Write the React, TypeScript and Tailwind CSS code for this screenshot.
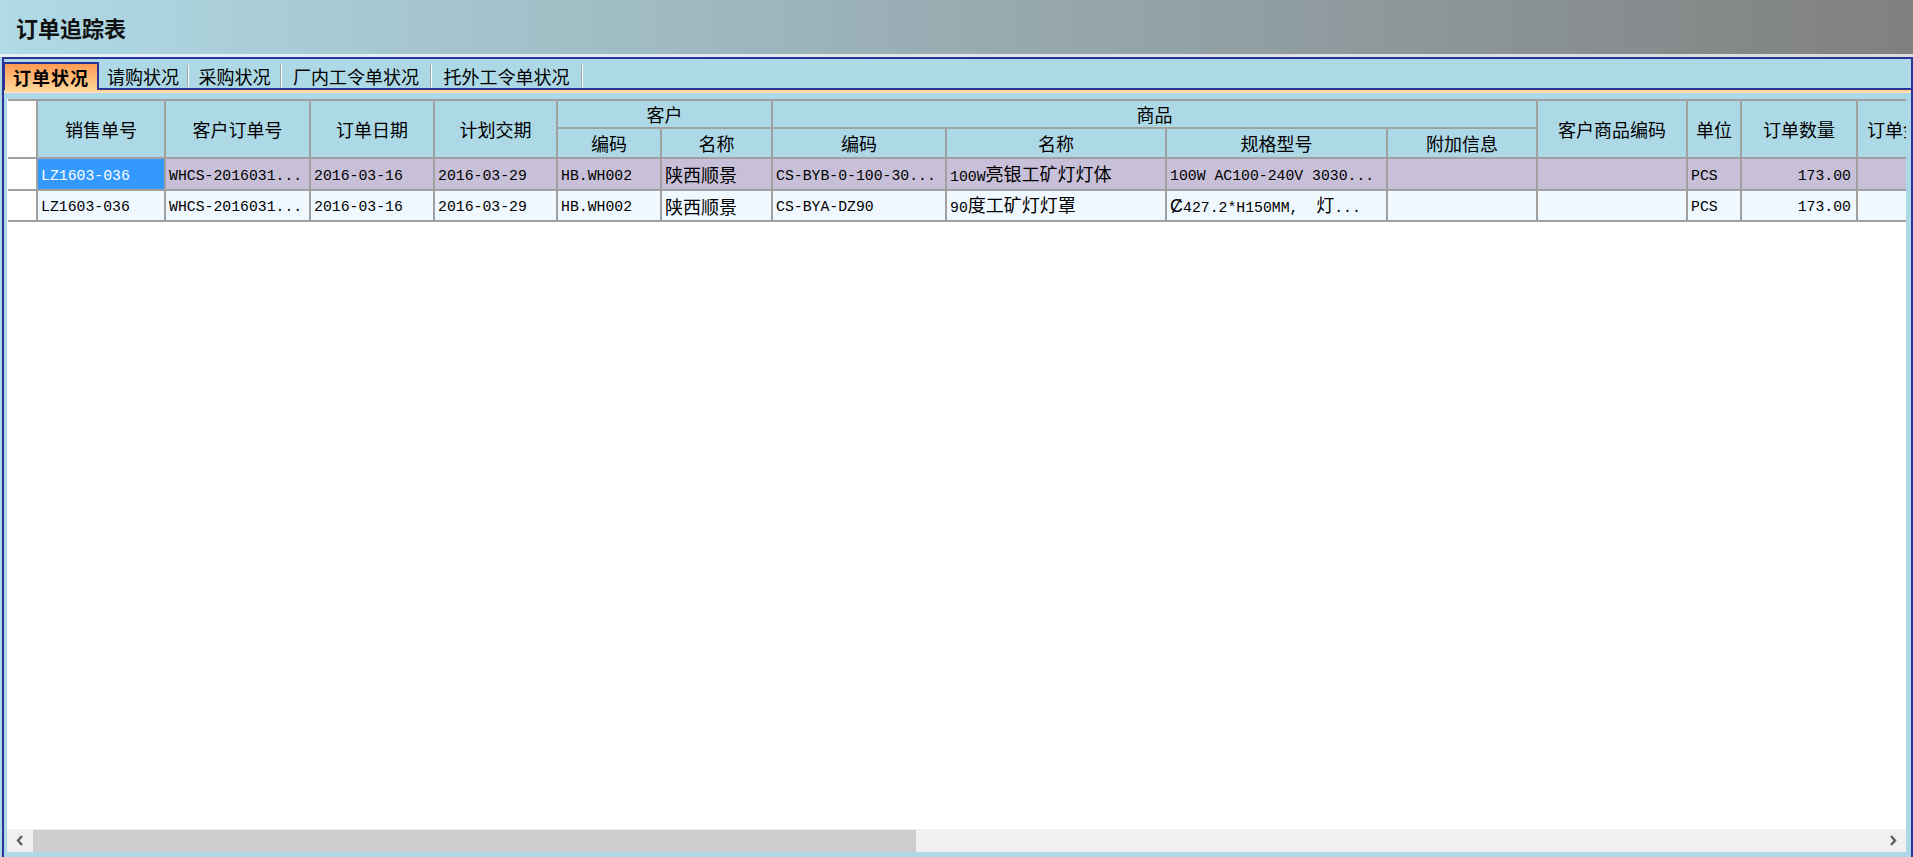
import React from "react";

const WIDE = /([\u0200-\u02ff\u2000-\uffff]+)/;

function Txt({ s }: { s: string }) {
  const parts = s.split(WIDE);
  return (
    <span className="whitespace-pre">
      {parts.map((p, i) =>
        p === "" ? null : WIDE.test(p) ? (
          <span key={i} className="font-['Noto_Sans_CJK_SC',sans-serif] text-[18px]">
            {p}
          </span>
        ) : (
          <span key={i} className="font-['Liberation_Mono',monospace] text-[14.8px]">
            {p}
          </span>
        )
      )}
    </span>
  );
}

const rows = [
  ["LZ1603-036", "WHCS-2016031...", "2016-03-16", "2016-03-29", "HB.WH002", "陕西顺景", "CS-BYB-0-100-30...", "100W亮银工矿灯灯体", "100W AC100-240V 3030...", "", "", "PCS", "173.00", ""],
  ["LZ1603-036", "WHCS-2016031...", "2016-03-16", "2016-03-29", "HB.WH002", "陕西顺景", "CS-BYA-DZ90", "90度工矿灯灯罩", "Ȼ427.2*H150MM,  灯...", "", "", "PCS", "173.00", ""],
];

const hd = "bg-[#add8e6] border-l-2 border-b-2 border-[#a0a0a0] flex items-center justify-center text-[18px] leading-none text-black";
const rh = "bg-white border-b-2 border-[#a0a0a0]";

export default function App() {
  return (
    <div className="w-[1913px] h-[857px] overflow-hidden bg-[#add8e6] flex flex-col font-['Noto_Sans_CJK_SC',sans-serif] text-black">
      {/* title */}
      <div className="h-[54px] shrink-0 bg-gradient-to-r from-[#afdae6] to-[#808080] flex items-center pl-[16px]">
        <h1 className="text-[22px] font-bold text-[#111] leading-none">订单追踪表</h1>
      </div>
      <div className="h-[3px] shrink-0 bg-gradient-to-r from-[#e4f2f6] to-[#dcdcdc]" />

      {/* tab panel */}
      <div className="flex-1 min-h-0 ml-[2px] border-x-2 border-t-2 border-[#2a3399] flex flex-col">
        <div className="h-[31px] shrink-0 flex items-start pt-[3px] border-b-2 border-[#2a3399]">
          <div className="relative z-10 -ml-[1px] h-[28px] w-[96px] border-x-2 border-t-2 border-[#2a3399] bg-gradient-to-b from-[#ff9a52] to-[#ffd596] flex items-center justify-center text-[18px] font-bold tracking-[1px] leading-none">
            订单状况
          </div>
          <div className="w-[90px] h-[28px] flex items-center text-[18px] leading-none">
            <span className="flex-1 text-center">请购状况</span>
            <span className="w-[1px] h-[22px] bg-[#9fa9ad]" />
            <span className="w-[1px] h-[22px] bg-white" />
          </div>
          <div className="w-[93px] h-[28px] flex items-center text-[18px] leading-none">
            <span className="flex-1 text-center">采购状况</span>
            <span className="w-[1px] h-[22px] bg-[#9fa9ad]" />
            <span className="w-[1px] h-[22px] bg-white" />
          </div>
          <div className="w-[150px] h-[28px] flex items-center text-[18px] leading-none">
            <span className="flex-1 text-center">厂内工令单状况</span>
            <span className="w-[1px] h-[22px] bg-[#9fa9ad]" />
            <span className="w-[1px] h-[22px] bg-white" />
          </div>
          <div className="w-[151px] h-[28px] flex items-center text-[18px] leading-none">
            <span className="flex-1 text-center">托外工令单状况</span>
            <span className="w-[1px] h-[22px] bg-[#9fa9ad]" />
            <span className="w-[1px] h-[22px] bg-white" />
          </div>
        </div>
        <div className="h-[3px] shrink-0 bg-gradient-to-b from-[#ffcc88] to-[#ffe6c0]" />

        <div className="flex-1 min-h-0 pt-[6px] pl-[3px] pr-[5px] pb-[5px] flex flex-col">
          {/* grid */}
          <div className="flex-1 min-h-0 bg-white overflow-hidden pl-[1px]">
            <div className="w-max border-t-2 border-[#a0a0a0] grid grid-cols-[28px_128px_145px_124px_123px_104px_111px_174px_220px_221px_150px_150px_54px_116px_94px] grid-rows-[28px_30px_32px_31px]">
              <div className={`${rh} row-span-2`} />
              <div className={`${hd} row-span-2`}>销售单号</div>
              <div className={`${hd} row-span-2`}>客户订单号</div>
              <div className={`${hd} row-span-2`}>订单日期</div>
              <div className={`${hd} row-span-2`}>计划交期</div>
              <div className={`${hd} col-span-2`}>客户</div>
              <div className={`${hd} col-span-4`}>商品</div>
              <div className={`${hd} row-span-2`}>客户商品编码</div>
              <div className={`${hd} row-span-2`}>单位</div>
              <div className={`${hd} row-span-2`}>订单数量</div>
              <div className={`${hd} row-span-2 justify-start pl-[9px]`}>订单金额</div>
              <div className={hd}>编码</div>
              <div className={hd}>名称</div>
              <div className={hd}>编码</div>
              <div className={hd}>名称</div>
              <div className={hd}>规格型号</div>
              <div className={hd}>附加信息</div>

              {rows.map((r, ri) => (
                <React.Fragment key={ri}>
                  <div className={rh} />
                  {r.map((c, ci) => {
                    const sel = ri === 0 && ci === 0;
                    const bg = sel ? "bg-[#3399ff] text-white" : ri === 0 ? "bg-[#c8c0d8]" : "bg-[#f0f8ff]";
                    const align = ci === 12 ? "justify-end pr-[5px]" : "pl-[3px]";
                    return (
                      <div
                        key={ci}
                        className={`${bg} ${align} border-l-2 border-b-2 border-[#a0a0a0] flex items-center overflow-hidden leading-none`}
                      >
                        <Txt s={c} />
                      </div>
                    );
                  })}
                </React.Fragment>
              ))}
            </div>
          </div>

          {/* horizontal scrollbar */}
          <div className="h-[23px] shrink-0 flex bg-[#f0f0f0]">
            <div className="w-[26px] flex items-center justify-center">
              <svg width="8" height="11" viewBox="0 0 8 11">
                <polyline points="6,1 2,5.5 6,10" fill="none" stroke="#606060" strokeWidth="2.4" />
              </svg>
            </div>
            <div className="flex-1 flex">
              <div className="w-[883px] mt-[1px] bg-[#cdcdcd]" />
            </div>
            <div className="w-[26px] flex items-center justify-center">
              <svg width="8" height="11" viewBox="0 0 8 11">
                <polyline points="2,1 6,5.5 2,10" fill="none" stroke="#606060" strokeWidth="2.4" />
              </svg>
            </div>
          </div>
        </div>
      </div>
    </div>
  );
}
